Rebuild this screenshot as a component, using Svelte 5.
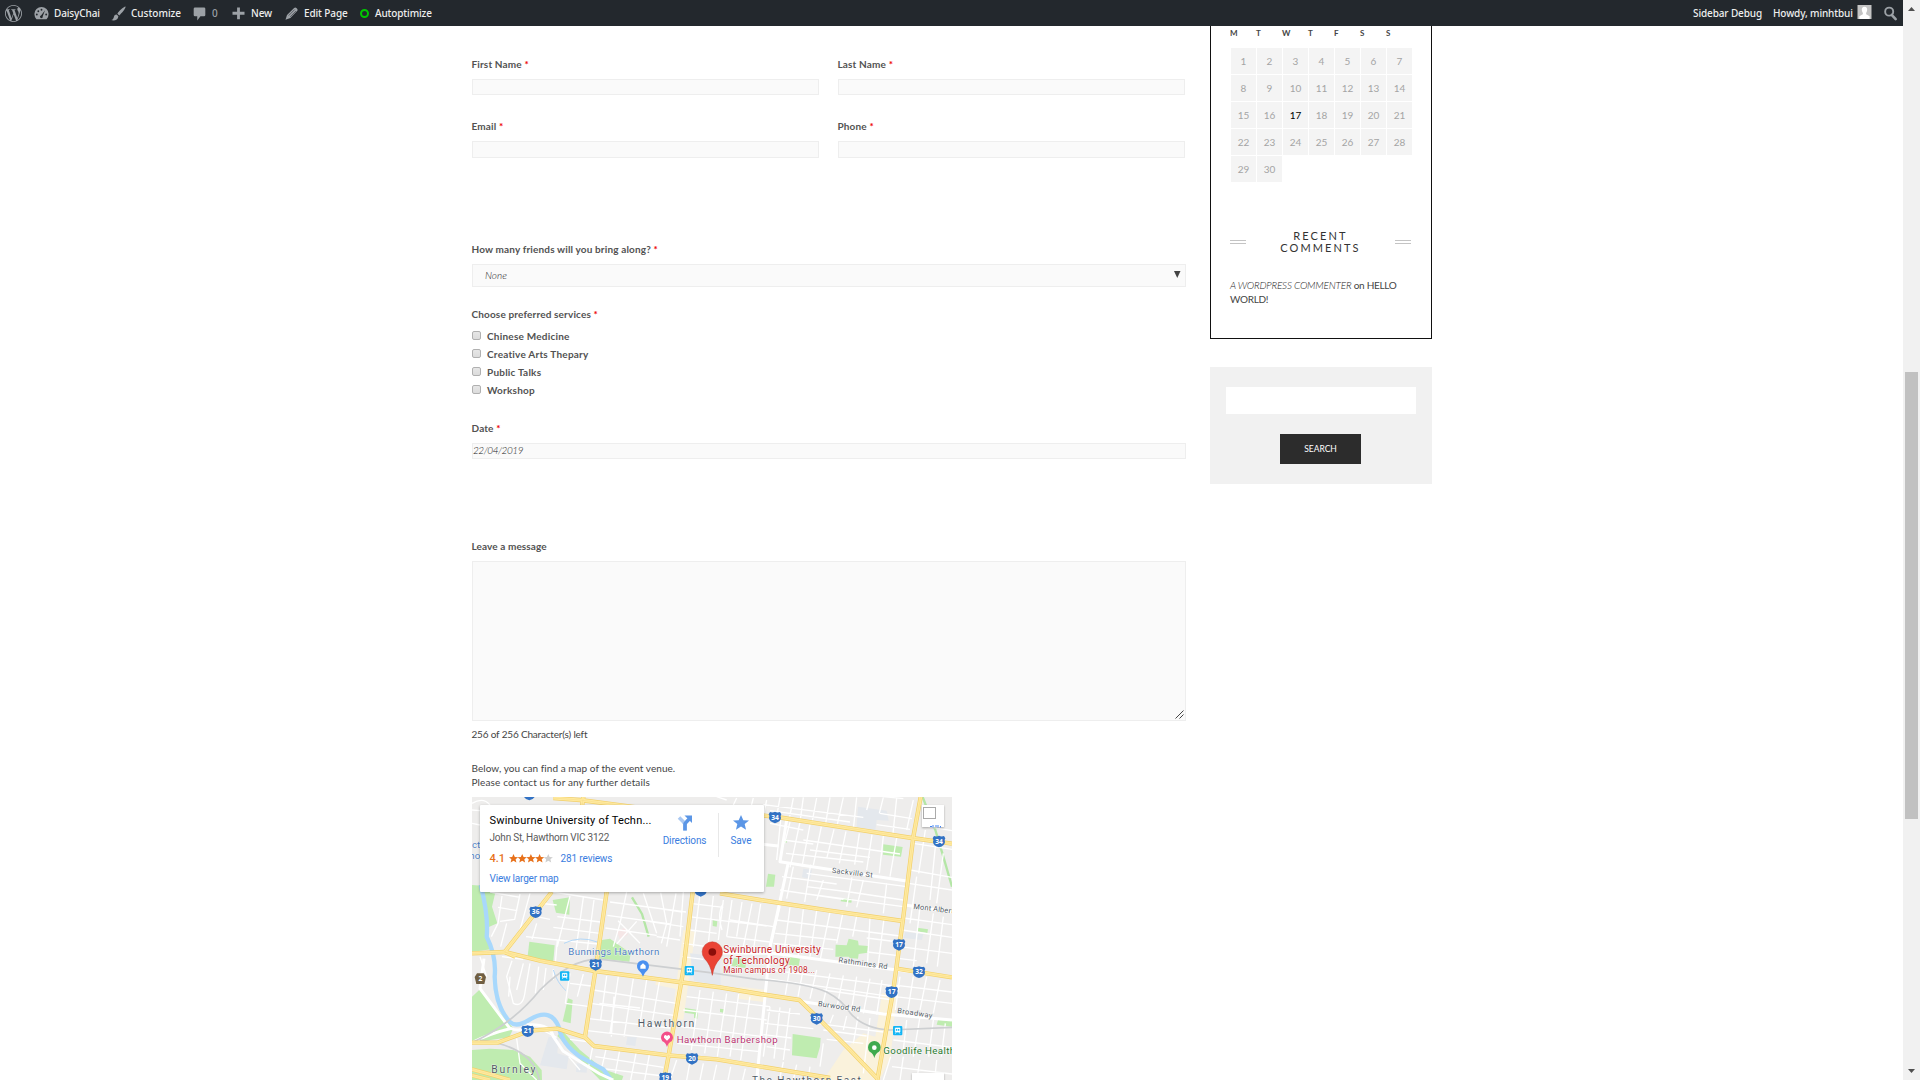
<script>
  const week = ['M', 'T', 'W', 'T', 'F', 'S', 'S'];
  const days = Array.from({ length: 30 }, (_, i) => i + 1);
  const services = ['Chinese Medicine', 'Creative Arts Thepary', 'Public Talks', 'Workshop'];

  const parks = [
    'M6 285 L80 290 L66 350 L82 400 L48 415 L62 478 L6 486Z',
    'M248 330 L300 322 L298 374 L258 368Z',
    'M178 455 L254 466 L250 514 L172 506Z',
    'M395 450 L420 446 L482 490 L478 515 L380 505Z',
    'M6 620 L30 598 L130 715 L118 742 L6 758Z',
    'M6 780 L60 776 L130 780 L180 800 L215 840 L216 870 L6 870Z',
    'M262 738 L275 720 L330 780 L400 838 L460 858 L456 870 L390 870Z',
    'M294 625 L308 630 L302 700 L278 694Z',
    'M1240 163 L1298 171 L1293 200 L1239 194Z',
    'M894 251 L916 254 L912 290 L888 290Z',
    'M1097 464 L1130 466 L1136 446 L1164 452 L1166 466 L1194 468 L1192 488 L1166 492 L1164 506 L1140 504 L1136 500 L1096 500Z',
    'M968 732 L1052 744 L1050 770 L1040 805 L966 796Z',
    'M792 504 L830 508 L826 534 L784 528Z',
    'M956 500 L990 506 L986 528 L952 524Z',
    'M1404 690 L1446 692 L1446 710 L1400 704Z',
    'M1342 413 L1374 418 L1372 429 L1342 424Z',
    'M1114 324 L1146 327 L1144 338 L1112 334Z',
    'M645 654 L684 660 L682 686 L672 684 L672 672 L644 668Z',
    'M728 390 L742 394 L740 410 L728 408Z',
    'M942 147 L952 149 L950 158 L942 157Z',
    'M750 656 L762 658 L760 668 L750 666Z'
  ];
  const blocks = [
    'M1164 50 L1250 62 L1256 92 L1220 90 L1216 120 L1160 112Z',
    'M236 740 L266 745 L262 790 L296 800 L290 838 L210 826Z',
    'M320 820 L352 824 L350 848 L318 846Z',
    'M660 490 L750 500 L752 588 L672 572Z',
    'M1000 236 L1026 239 L1020 266 L996 262Z',
    'M1306 426 L1360 432 L1356 450 L1300 444Z',
    'M472 740 L500 742 L496 768 L468 764Z',
    'M360 480 L400 470 L404 505 L372 508Z'
  ];
  const sands = [
    'M640 420 L676 425 L640 690 L606 684Z',
    'M1236 610 L1280 614 L1262 800 L1230 870 L1060 870 L1120 780 L1180 730 L1216 740Z',
    'M810 590 L890 600 L884 636 L804 626Z',
    'M560 560 L640 575 L634 600 L556 584Z'
  ];
  // Residential streets, kept as one long stroke list per district.
  const streets = [
    'M60 306 L150 322 M96 318 L84 400 L64 440 M150 312 L134 388 L90 394 M84 352 L142 362 M180 310 L150 420 M110 400 L92 470 M200 400 L186 448 M212 340 L260 345',
    'M250 306 L400 330 M300 318 L262 470 M340 322 L318 478 M372 330 L352 480 M262 380 L392 396 M250 412 L390 430 M240 448 L384 462 M168 440 L262 450 L256 520 M200 380 L240 388',
    'M420 336 L648 366 M412 376 L600 402 M406 414 L560 436 M470 306 L450 400 L430 470 M520 310 L560 430 M572 308 L590 400 L574 460 M618 310 L590 470 M444 392 L510 460 M500 394 L440 462 M545 352 L636 366 M540 395 L640 410 M560 440 L630 450',
    'M126 512 L110 560 L130 640 Q160 656 166 600 L180 520 M160 520 L140 600 M206 530 L196 610 M228 534 L220 600 M250 538 L250 570 M300 550 L286 640 M340 552 L322 620 M120 560 L116 620 M30 500 L50 560 M96 500 L160 508',
    'M370 600 L620 640 M362 640 L612 676 M356 686 L600 714 M352 722 L594 750 M410 558 L392 690 M445 560 L420 730 M490 566 L462 740 M530 570 L510 700 M568 576 L548 690 M432 620 L424 740 M388 640 L510 654 M300 580 L364 588 M286 640 L360 650',
    'M370 760 L356 830 M410 770 L396 830 M450 776 L436 850 M500 780 L482 870 M540 784 L524 870 M376 800 L580 832 M400 836 L580 858 M300 748 L360 756 M216 720 L260 742 M140 745 L150 820 L200 870 M296 800 L330 840',
    'M640 460 L740 474 M636 500 L700 508 M650 620 L900 650 M640 660 L890 690 M632 710 L880 740 M622 760 L870 785 M690 600 L664 780 M730 605 L704 790 M770 610 L742 800 M806 612 L780 800 M840 620 L812 810 M660 420 L740 430',
    'M620 810 L600 870 M660 815 L650 870 M700 820 L690 870 M740 824 L730 870 M782 830 L774 870 M826 836 L818 870 M866 840 L862 870',
    'M640 306 L630 440 M690 312 L670 470 M730 318 L714 470 M760 330 L745 450 M786 330 L770 440 M816 336 L800 440 M846 340 L820 470 M872 342 L850 480 M660 340 L760 352 M656 380 L890 408 M780 390 L910 410 M770 440 L900 456 M816 470 L910 482 M760 340 Q740 370 756 420',
    'M880 82 L870 160 M900 100 L1000 120 M932 88 L920 210 M960 96 L944 160 M990 96 L970 190 L960 232 M1020 104 L996 230 M1054 110 L1030 226 M1092 118 L1070 206 M1128 124 L1108 220 M1168 130 L1154 224 M1206 134 L1190 240 M1240 138 L1228 250 M1280 144 L1260 260 M948 190 L1180 216 M1000 150 L1290 192 M1020 180 L1200 202 M940 150 L1030 162',
    'M936 260 L1100 282 M930 300 L1120 328 M1010 290 L1140 306 L1300 330 M1000 310 L1300 350 M1060 270 L1040 330 M1146 262 L1130 350 M1180 270 L1160 352 M1250 280 L1240 370 M1022 224 L1004 336 M970 230 L950 326 M1010 250 L1310 290',
    'M930 350 L900 480 M960 352 L940 500 M1000 358 L984 500 M1040 362 L1020 500 M1080 366 L1050 512 M1118 372 L1100 460 M1160 378 L1148 440 M1200 384 L1192 530 M1242 386 L1224 530 M920 390 L1290 438 M916 430 L1100 450 M910 460 L1090 478 M1190 444 L1286 456 M1192 486 L1278 496',
    'M900 540 L1290 590 M890 566 L1280 622 M960 530 L946 614 M1000 536 L984 620 M1040 540 L1020 626 M1080 550 L1060 636 M1120 556 L1100 656 M1160 560 L1144 664 M1200 566 L1180 670 M1236 570 L1220 674 M1060 600 L1270 630',
    'M890 660 L990 672 M884 700 L1030 716 M880 734 L964 744 M1040 700 L1240 726 M1060 720 L1190 738 M1070 748 L1180 760 M900 650 L880 800 M930 652 L912 806 M960 654 L940 810 M1090 674 L1080 700 M1130 678 L1120 720 M1164 680 L1150 760 M1200 684 L1180 850 M890 770 L960 780 M1060 760 L1050 830 M940 816 L928 870 M980 824 L970 870 M1020 830 L1014 870',
    'M1330 30 L1310 120 M1300 26 L1240 20 M1374 110 L1446 122 M1330 160 L1446 178 M1350 40 L1340 90 M1366 120 L1346 250 M1396 170 L1380 330 M1320 240 L1446 262 M1316 280 L1446 300 M1420 190 L1400 340 M1340 260 L1320 400 M1300 384 L1446 404 M1296 420 L1446 442 M1350 350 L1330 530 M1390 370 L1370 520 M1420 380 L1402 530 M1290 470 L1446 490 M1290 506 L1340 512',
    'M1290 560 L1276 660 M1330 560 L1312 670 M1370 560 L1350 660 M1410 570 L1390 670 M1280 586 L1446 606 M1276 620 L1446 640 M1310 690 L1300 780 M1350 680 L1330 800 M1390 690 L1376 800 M1426 700 L1414 800 M1270 750 L1446 772 M1262 800 L1240 870 M1300 800 L1290 870 M1350 810 L1340 870 M1400 810 L1394 870 M1266 830 L1446 852',
    'M770 30 L740 20 M800 24 L790 45 M850 24 L838 70 M890 30 L880 80 M930 22 L920 80 M970 24 L958 86 M1000 22 L990 96 M1040 24 L1026 98 M1080 22 L1066 106 M1120 22 L1100 112 M1160 22 L1150 118 M1200 22 L1190 60 M1240 22 L1228 70 M1280 24 L1268 140 M880 44 L1180 82 M900 62 L1140 96 M1230 70 L1326 86 M1220 104 L1320 118 M6 60 L30 62 M6 100 L30 105 M6 40 Q40 20 60 45'
  ];
  const broad = [
    'M6 758 Q60 730 120 716 L30 596 L42 506',
    'M120 714 Q150 728 170 710',
    'M170 705 Q240 700 250 740 L280 784 L390 852 L430 870',
    'M870 162 L926 168 M950 90 L930 215 L1090 240 L1315 274',
    'M954 222 L922 370 L900 470 L860 870',
    'M740 488 L910 490 L1280 540 L1446 560',
    'M990 634 L1240 672 L1446 690',
    'M1300 344 L1446 366'
  ];
  const arterials = [
    'M6 490 L104 486 L210 512 L375 543 L750 592 L870 612 L988 630 L1050 690 L1140 780 L1226 870',
    'M245 306 L104 486 L136 500',
    'M410 306 L376 543 L345 740',
    'M668 306 L640 540 L596 796 L582 870',
    'M6 758 L82 758 L180 722 L262 716 L345 742 L372 768 L596 796 L740 808 L1080 864',
    'M750 310 L870 330 L1080 362 L1298 393',
    'M860 74 L940 84 L1120 112 L1326 144 L1446 161',
    'M1352 21 L1330 140 L1300 380 L1270 600 L1222 870',
    'M1280 536 L1446 562',
    'M6 838 L50 850 L120 870 M6 856 L60 870 M250 24 L330 30 L500 52',
    'M340 20 L336 50'
  ];
  const shields = [
    [197, 366, '36'], [377, 524, '21'], [173, 723, '21'], [666, 806, '20'], [586, 864, '19'],
    [915, 82, '34'], [1407, 154, '34'], [1287, 464, '17'], [1265, 606, '17'], [1347, 546, '32'],
    [1040, 686, '30'], [178, 13, ''], [692, 302, '']
  ];
  const trains = [[284, 558], [658, 542], [1283, 722]];
  const star = 'M0-10 L2.9-3.5 L10-3.1 L4.6 1.4 L6.3 8.4 L0 4.5 L-6.3 8.4 L-4.6 1.4 L-10-3.1 L-2.9-3.5Z';
</script>

<div class="screen">
  <div class="page">
    <header class="bar">
      <svg class="wp" viewBox="0 0 24 24"><path d="M21.469 6.825c.84 1.537 1.318 3.3 1.318 5.175 0 3.979-2.156 7.456-5.363 9.325l3.295-9.527c.615-1.54.82-2.771.82-3.864 0-.405-.026-.78-.07-1.11m-7.981.105c.647-.03 1.232-.105 1.232-.105.582-.075.514-.93-.067-.899 0 0-1.755.135-2.88.135-1.064 0-2.85-.15-2.85-.15-.585-.03-.661.855-.075.885 0 0 .54.061 1.125.09l1.68 4.605-2.37 7.08L5.354 6.9c.649-.03 1.234-.1 1.234-.1.585-.075.516-.93-.065-.896 0 0-1.746.138-2.874.138-.2 0-.438-.008-.69-.015C4.911 3.15 8.235 1.215 12 1.215c2.809 0 5.365 1.072 7.286 2.833-.046-.003-.091-.009-.141-.009-1.06 0-1.812.923-1.812 1.914 0 .89.513 1.643 1.06 2.531.411.72.89 1.643.89 2.977 0 .915-.354 1.994-.821 3.479l-1.075 3.585-3.9-11.61.001.014zM12 22.784c-1.059 0-2.081-.153-3.048-.437l3.237-9.406 3.315 9.087c.024.053.05.101.078.149-1.12.393-2.325.609-3.582.609M1.211 12c0-1.564.336-3.05.935-4.39L7.29 21.709C3.694 19.96 1.212 16.271 1.211 12M12 0C5.385 0 0 5.385 0 12s5.385 12 12 12 12-5.385 12-12S18.615 0 12 0" /></svg>
      <div class="item w-site">
        <svg viewBox="0 0 16 16"><path d="M2.6 14A7.6 7.6 0 1 1 13.4 14Z" /><g class="cut"><circle cx="3" cy="9" r="1" /><circle cx="4.6" cy="5.6" r="1" /><circle cx="8" cy="4" r="1" /><circle cx="13" cy="9" r="1" /><path d="M11.8 4.4L9.3 11a1.5 1.5 0 1 1-1.8-1Z" /></g></svg>
        <span>DaisyChai</span>
      </div>
      <div class="item w-custom">
        <svg viewBox="0 0 16 16"><path d="M15.6.5C13 1 8.600 5 6.800 8.200L8.800 10C11.500 7.500 15.500 3 15.600.5ZM6 9C4 9 3.300 10.200 3 12 2.600 13.800 1.600 14.600.2 15 3.500 16 7.500 15 7.900 10.900Z" /></svg>
        <span class="t-custom">Customize</span>
      </div>
      <div class="item w-comment">
        <svg viewBox="0 0 16 16"><path d="M3.200 1.600H12.800Q14.200 1.600 14.200 3V9.600Q14.200 11 12.800 11H9L5.600 15.400V11H3.200Q1.800 11 1.800 9.600V3Q1.800 1.600 3.200 1.600Z" /></svg>
        <span class="dim">0</span>
      </div>
      <div class="item w-new">
        <svg viewBox="0 0 16 16"><path d="M6.500 1.500H9.500V6.200H14.400V9.200H9.500V14H6.500V9.200H1.600V6.200H6.500Z" /></svg>
        <span>New</span>
      </div>
      <div class="item w-edit">
        <svg viewBox="0 0 16 16"><path d="M10.800 2.200Q12 1 13.200 2.200L14 3Q15.200 4.200 14 5.400L6.800 12.800 1.600 14.600 3.200 9.600Z" /><path class="slit" d="M5 10.200L11.400 3.800M6.600 11.600L12.800 5.400" /></svg>
        <span>Edit Page</span>
      </div>
      <div class="item"><i class="ring"></i><span>Autoptimize</span></div>
      <div class="item right"><span>Sidebar Debug</span></div>
      <div class="item howdy">
        <span>Howdy, minhtbui</span>
        <svg class="avatar" viewBox="0 0 15 15"><rect width="15" height="15" fill="#c4c4c4" /><path d="M7.500 2C9.800 2 10.500 3.600 10.400 5.200 10.300 6.800 9.600 8 9.200 8.600L9.300 10 13 12V15H2V12L5.700 10 5.800 8.600C5.400 8 4.700 6.800 4.600 5.200 4.500 3.600 5.200 2 7.500 2Z" fill="#fff" /></svg>
      </div>
      <svg class="find" viewBox="0 0 16 16"><circle cx="6.600" cy="6" r="4.300" fill="none" stroke="#9ca1a6" stroke-width="2" /><path d="M9.300 9.500L13.500 14" stroke="#9ca1a6" stroke-width="2.800" stroke-linecap="round" /></svg>
    </header>

    <div class="columns">
      <main>
        <div class="pair">
          <div><p class="label">First Name <b>*</b></p><div class="field"></div></div>
          <div><p class="label">Last Name <b>*</b></p><div class="field"></div></div>
        </div>
        <div class="pair second">
          <div><p class="label">Email <b>*</b></p><div class="field tall"></div></div>
          <div><p class="label">Phone <b>*</b></p><div class="field tall"></div></div>
        </div>
        <section class="friends">
          <p class="label">How many friends will you bring along? <b>*</b></p>
          <div class="field select"><em>None</em><svg viewBox="0 0 7 7"><path d="M0 0H6.500L3.250 7Z" /></svg></div>
        </section>
        <section class="services">
          <p class="label">Choose preferred services <b>*</b></p>
          <ul>
            {#each services as service}
              <li><i></i><span>{service}</span></li>
            {/each}
          </ul>
        </section>
        <section class="date">
          <p class="label">Date <b>*</b></p>
          <div class="field"><em>22/04/2019</em></div>
        </section>
        <section class="message">
          <p class="label plain">Leave a message</p>
          <div class="field area"><svg viewBox="0 0 9 9"><path d="M0.500 8.500L8.500 .5M4.500 8.500L8.500 4.500" /></svg></div>
        </section>
        <p class="note count">256 of 256 Character(s) left</p>
        <p class="note">Below, you can find a map of the event venue.</p>
        <p class="note please">Please contact us for any further details</p>

        <div class="map">
          <svg class="canvas" viewBox="6 21 1440 849">
            <rect x="6" y="21" width="1440" height="849" fill="#eeedec" />
            {#each sands as d}<path {d} fill="#faf2dc" />{/each}
            {#each blocks as d}<path {d} fill="#e4e8ed" />{/each}
            {#each parks as d}<path {d} fill="#bfecb0" />{/each}
            <path d="M440 425 L466 412 L474 434 L450 448Z" fill="#f5e6e6" />
            <path d="M486 322 L516 372 L536 440" class="green" />
            <path d="M1358 21 L1396 120 L1420 200 L1446 290" class="green" />
            <g class="streets">{#each streets as d}<path {d} />{/each}</g>
            <path class="river" d="M32 285 Q56 380 50 440 Q80 500 74 560 Q76 650 120 696 Q140 714 180 688 Q246 650 268 716 Q276 762 330 800 L400 838 L424 870" />
            <path class="creek" d="M282 460 Q330 436 382 456 M250 540 Q262 580 288 602" />
            <g class="broad">{#each broad as d}<path {d} />{/each}</g>
            <path class="rail" d="M6 758 Q130 700 210 600 Q310 500 396 508 L720 548 L860 568 Q1010 580 1070 606 Q1116 630 1140 668 Q1180 716 1260 720 L1446 712 M30 750 Q190 770 208 870" />
            <g class="art-edge">{#each arterials as d}<path {d} />{/each}</g>
            <g class="art">{#each arterials as d}<path {d} />{/each}</g>
            <g class="art-mid">{#each arterials as d}<path {d} />{/each}</g>

            {#each shields as [x, y, n]}
              <g transform={`translate(${x} ${y})`}>
                <path d="M-15-16 Q-7-13 0-17 Q7-13 15-16 L19-9 Q15-4 18 2 Q17 13 0 18 Q-17 13-18 2 Q-15-4-19-9Z" fill="#3272c4" />
                {#if n}<text class="num" x="0" y="7">{n}</text>{/if}
              </g>
            {/each}
            <g transform="translate(31 567)"><path d="M-10-17H10L17-6 12 15H-12L-17-6Z" fill="#705f43" /><text class="num" y="7">2</text></g>
            {#each trains as [x, y]}
              <g transform={`translate(${x} ${y})`}>
                <rect x="-14" y="-14" width="28" height="28" rx="3" fill="#12b5f5" />
                <path d="M-7-8H7V4H-7ZM-7 9L-5 5M7 9L5 5" fill="#fff" stroke="#fff" stroke-width="2" />
                <path d="M-5-5H-1V0H-5ZM1-5H5V0H1Z" fill="#12b5f5" />
              </g>
            {/each}

            <text x="295" y="495" class="poi" fill="#4d7cc0" textLength="273">Bunnings Hawthorn</text>
            <path d="M519 560 Q514 547 505 540 A18 18 0 1 1 533 540 Q524 547 519 560Z" fill="#4a90f0" />
            <path d="M511 536V527L519 520 527 527V536Z" fill="#fff" />
            <text x="503" y="710" class="town" textLength="170">Hawthorn</text>
            <text x="64" y="849" class="town" textLength="132">Burnley</text>
            <text x="846" y="882" class="town east" textLength="326">The Hawthorn East</text>
            <text x="620" y="759" class="poi" fill="#b8326f" textLength="303">Hawthorn Barbershop</text>
            <path d="M591 771 Q587 758 577 754 A18 18 0 1 1 605 754 Q595 758 591 771Z" fill="#f3508a" />
            <path d="M591 752L582 743Q581 735 587 735L591 738 595 735Q601 735 600 743Z" fill="#fff" />
            <text x="1240" y="792" class="poi" fill="#26782e" textLength="215">Goodlife Health</text>
            <path d="M1213 804 Q1210 790 1199 785 A19 19 0 1 1 1227 785 Q1216 790 1213 804Z" fill="#3faa4e" />
            <circle cx="1213" cy="773" r="7" fill="#fff" />

            <text class="road" transform="translate(1085 248) rotate(7)" textLength="123">Sackville St</text>
            <text class="road" transform="translate(1330 356) rotate(7)" textLength="121">Mont Albert</text>
            <text class="road" transform="translate(1105 517) rotate(8)" textLength="148">Rathmines Rd</text>
            <text class="road" transform="translate(1043 648) rotate(8)" textLength="128">Burwood Rd</text>
            <text class="road" transform="translate(1281 668) rotate(9)" textLength="106">Broadway</text>
            <text class="poi" fill="#4d7cc0" x="6" y="174">ct</text>
            <text class="poi" fill="#4d7cc0" x="-2" y="206">no</text>

            <path d="M727 556 Q722 524 704 506 A30.500 30.500 0 1 1 750 506 Q732 524 727 556Z" fill="#ea4335" stroke="#c5362b" stroke-width="1.500" />
            <circle cx="727" cy="486" r="11.500" fill="#8c0e0a" />
            <text x="760" y="490" class="venue" textLength="292">Swinburne University</text>
            <text x="760" y="521" class="venue" textLength="199">of Technology</text>
            <text x="760" y="548" class="venue sub" textLength="275">Main campus of 1908...</text>
          </svg>

          <div class="card">
            <div class="info">
              <h3>Swinburne University of Techn...</h3>
              <p class="addr">John St, Hawthorn VIC 3122</p>
              <p class="rate"><b>4.1</b>
                <svg viewBox="0 0 44 9">
                  {#each [0, 1, 2, 3, 4] as i}
                    <path d={star} transform={`translate(${4.5 + i * 8.7} 4.700) scale(.46)`} fill={i < 4 ? '#e7711b' : '#cfcfcf'} />
                  {/each}
                </svg>
                <a href="#reviews">281 reviews</a></p>
              <a class="larger" href="#map">View larger map</a>
            </div>
            <a class="act dir" href="#directions">
              <svg viewBox="0 0 16 16"><path d="M8 15.500V10Q8 8 6 6.500L2 2.500" fill="none" stroke="#a9c8f2" stroke-width="3.600" /><path d="M8 15.500V10Q8 8 9.500 6.800L12 4.300" fill="none" stroke="#5b96e6" stroke-width="3.600" /><path d="M7.500 .5H15V8Z" fill="#5b96e6" /></svg>
              Directions</a>
            <a class="act save" href="#save">
              <svg viewBox="-10 -10 20 20"><path d={star} fill="#5b96e6" /></svg>
              Save</a>
          </div>
          <div class="chip"><i></i><svg viewBox="0 0 12 4"><path d="M0 2.500H2M3 1V3.500M5 2H7M8 1V3.500M10.500 2V3.500" stroke="#4285f4" /></svg></div>
          <div class="zoomer"></div>
        </div>
      </main>

      <aside>
        <div class="box">
          <div class="week">{#each week as d}<span>{d}</span>{/each}</div>
          <div class="days">{#each days as d}<span class:today={d === 17}>{d}</span>{/each}</div>
          <div class="title"><i></i><h2>Recent<br />Comments</h2><i></i></div>
          <p class="comment"><em>A WORDPRESS COMMENTER</em> <span>on HELLO</span><br /><span>WORLD!</span></p>
        </div>
        <div class="search">
          <div class="query"></div>
          <button>SEARCH</button>
        </div>
      </aside>
    </div>
  </div>

  <div class="scroll">
    <svg viewBox="0 0 17 17"><path d="M5 11L8.500 7 12 11Z" /></svg>
    <div class="thumb"></div>
    <svg viewBox="0 0 17 17"><path d="M5 6L8.500 10 12 6Z" /></svg>
  </div>
</div>

<style>
  :global(body) { margin: 0; background: #fff; overflow: hidden; }
  .screen { display: flex; width: 1920px; height: 1080px; overflow: hidden; font-family: Lato, "Liberation Sans", sans-serif; font-size: 10px; color: #444; }
  .page { width: 1903px; display: flex; flex-direction: column; }
  p, h2, h3, ul { margin: 0; padding: 0; }
  a { color: #3a7de0; text-decoration: none; }

  .bar { height: 26px; flex: none; background: #23282d; display: flex; align-items: center; box-sizing: border-box; padding-left: 5px; color: #eee; font: 500 10px/26px "Noto Sans", "Open Sans", sans-serif; letter-spacing: -.12px; }
  .bar svg { fill: #9ca1a6; flex: none; }
  .wp { width: 17px; height: 17px; margin-right: 12px; }
  .item { display: flex; align-items: center; white-space: nowrap; }
  .item > svg { width: 15px; height: 15px; margin-right: 5px; }
  .cut { fill: #23282d; }
  .slit { stroke: #23282d; stroke-width: .6; fill: none; }
  .t-custom { letter-spacing: 0; }
  .w-site { width: 77px; }
  .w-custom { width: 81px; }
  .w-comment { width: 39px; }
  .w-new { width: 53px; }
  .w-edit { width: 76px; }
  .dim { color: #9ca1a6; }
  .ring { width: 5px; height: 5px; border: 2px solid #00c800; border-radius: 50%; margin: 1px 6px 0 0; }
  .right { margin-left: auto; width: 80px; }
  .howdy { width: 110px; }
  .item > .avatar { margin: -2px 0 0 auto; width: 15px; height: 14px; }
  .howdy { box-sizing: border-box; padding-right: 11px; }
  .bar > .find { width: 15px; height: 15px; margin-right: 5px; }

  .columns { display: flex; flex: 1; padding-left: 472px; min-height: 0; }
  main { width: 714px; margin-right: 24px; padding-top: 31px; }
  .label { height: 22px; line-height: 15px; font-weight: 700; color: #525252; white-space: nowrap; letter-spacing: .15px; text-indent: -.5px; }
  .label b { color: #e00; font-weight: 700; }
  .plain { letter-spacing: .1px; }
  .field { box-sizing: border-box; height: 16px; border: 1px solid #eee; background: #fafafa; }
  .pair { display: grid; grid-template-columns: 347px 347px; column-gap: 19px; }
  .second { margin-top: 24px; }
  .tall { height: 17px; }
  .friends { margin-top: 84px; }
  .select { height: 23px; display: flex; justify-content: space-between; align-items: center; padding: 0 4px 2px 12px; }
  .select svg { width: 7px; height: 7px; fill: #444; }
  em { font-weight: 300; font-style: italic; color: #222; }
  .services { margin-top: 20px; }
  .services ul { list-style: none; margin-top: -2px; }
  .services li { display: flex; align-items: center; height: 18px; font-weight: 700; color: #525252; gap: 6px; letter-spacing: .22px; }
  .services i { box-sizing: border-box; width: 9px; height: 9px; margin-top: -2px; border: 1px solid #b0b0b0; border-radius: 2px; background: linear-gradient(#e6e6e6, #dcdcdc); }
  .date { margin-top: 22px; }
  .date .field { line-height: 12px; }
  .date em { letter-spacing: -.45px; }
  .message { margin-top: 80px; }
  .area { height: 160px; display: flex; justify-content: flex-end; align-items: flex-end; }
  .area svg { width: 9px; height: 9px; stroke: #444; margin: 0 1px 1px 0; }
  .note { line-height: 14px; white-space: nowrap; text-indent: -.5px; letter-spacing: .05px; }
  .count { margin: 6px 0 20px; letter-spacing: -.18px; }
  .please { margin-bottom: 8px; letter-spacing: .13px; }

  .map { position: relative; width: 480px; height: 283px; overflow: hidden; font-family: Roboto, sans-serif; }
  .canvas { display: block; width: 480px; height: 283px; }
  .canvas path { stroke-linejoin: round; }
  .streets { fill: none; stroke: #fff; stroke-width: 4; }
  .broad { fill: none; stroke: #fff; stroke-width: 9; }
  .river { fill: none; stroke: #a8d8fc; stroke-width: 13; }
  .creek { fill: none; stroke: #b4d8f8; stroke-width: 3; }
  .green { fill: none; stroke: #b4e6a6; stroke-width: 7; }
  .rail { fill: none; stroke: #cdcfd1; stroke-width: 5; }
  .art-edge { fill: none; stroke: #f2d06b; stroke-width: 13; }
  .art { fill: none; stroke: #ffeaa0; stroke-width: 9; }
  .art-mid { fill: none; stroke: #f7da86; stroke-width: 1.500; }
  .num { fill: #fff; font: 700 20px "Open Sans", sans-serif; text-anchor: middle; }
  .poi { font-size: 29px; stroke: #fff; stroke-width: 2px; paint-order: stroke; }
  .town { font-size: 31px; fill: #505a64; stroke: #fff; stroke-width: 2px; paint-order: stroke; }
  .east { font-size: 30px; }
  .road { font-size: 22px; fill: #4e5862; stroke: #fff; stroke-width: 2px; paint-order: stroke; }
  .venue { font-size: 30px; fill: #c5221f; stroke: #fff; stroke-width: 3px; paint-order: stroke; }
  .sub { font-size: 25px; }

  .card { position: absolute; left: 8px; top: 8px; width: 284px; height: 87px; background: #fff; box-shadow: 0 1px 3px rgba(0, 0, 0, .3); display: flex; box-sizing: border-box; padding: 8px 0 0 9.5px; border-radius: 1px; }
  .info { width: 172.5px; white-space: nowrap; }
  h3 { font: 400 11px/15px Roboto, sans-serif; color: #000; letter-spacing: .2px; }
  .addr { line-height: 19px; color: #5b5b5b; letter-spacing: -.2px; }
  .rate { display: flex; align-items: center; height: 22px; }
  .rate b { color: #e7711b; font-size: 11px; font-weight: 500; width: 19px; }
  .rate svg { width: 44px; height: 9px; margin-right: 8px; }
  .rate a { letter-spacing: -.12px; }
  .larger { line-height: 20px; letter-spacing: -.2px; }
  .act { display: flex; flex-direction: column; align-items: center; line-height: 14px; letter-spacing: -.12px; }
  .act svg { width: 16px; height: 16px; margin: 2px 0 3px; }
  .dir { width: 45px; margin-right: 11px; }
  .save { width: 44px; border-left: 1px solid #e8e8e8; height: 44px; }
  .chip { position: absolute; left: 450px; top: 8px; width: 22px; height: 22px; background: #fff; box-shadow: 0 1px 2px rgba(0, 0, 0, .3); }
  .chip i { display: block; width: 11px; height: 10px; margin: 2px 0 0 1px; border: 1px solid #aaa; }
  .chip svg { display: block; width: 12px; height: 4px; margin: 5px 0 0 8px; }
  .zoomer { position: absolute; left: 440px; top: 276px; width: 32px; height: 10px; background: #fff; box-shadow: 0 1px 2px rgba(0, 0, 0, .3); }

  aside { width: 222px; }
  .box { box-sizing: border-box; height: 313px; border: 1px solid #111; border-top: 0; padding: 0 19px; }
  .week { display: grid; grid-template-columns: repeat(7, 26px); font-size: 8px; font-weight: 700; line-height: 14px; height: 22px; color: #444; }
  .days { display: grid; grid-template-columns: repeat(7, 25px); grid-auto-rows: 26px; gap: 1px; padding-left: 1px; }
  .days span { background: #f4f4f4; color: #a4a4a4; text-align: center; line-height: 27px; }
  .days .today { color: #000; }
  .title { display: flex; justify-content: space-between; align-items: center; margin: 48px 1px 0 0; }
  .title i { width: 16px; height: 2px; border: solid #c4c4c4; border-width: 1px 0; }
  h2 { font: 400 11px/12px Lato, sans-serif; letter-spacing: 2.1px; text-transform: uppercase; text-align: center; color: #333; }
  .comment { margin-top: 24px; line-height: 14px; white-space: nowrap; letter-spacing: -.2px; }
  .comment span { letter-spacing: -.3px; }
  .search { height: 117px; margin-top: 28px; background: #f1f1f1; display: flex; flex-direction: column; align-items: center; box-sizing: border-box; padding-top: 20px; }
  .query { width: 190px; height: 27px; background: #fff; margin-bottom: 20px; }
  button { width: 81px; height: 30px; border: 0; padding: 0; margin-right: 1px; background: #2c2c2c; color: #fff; font: 400 8.500px Lato, sans-serif; }

  .scroll { width: 17px; background: #f1f1f1; display: flex; flex-direction: column; align-items: center; }
  .scroll svg { width: 17px; height: 17px; fill: #505050; flex: none; }
  .thumb { width: 13px; height: 447px; background: #c1c1c1; margin: 355px 0 auto; }
</style>
